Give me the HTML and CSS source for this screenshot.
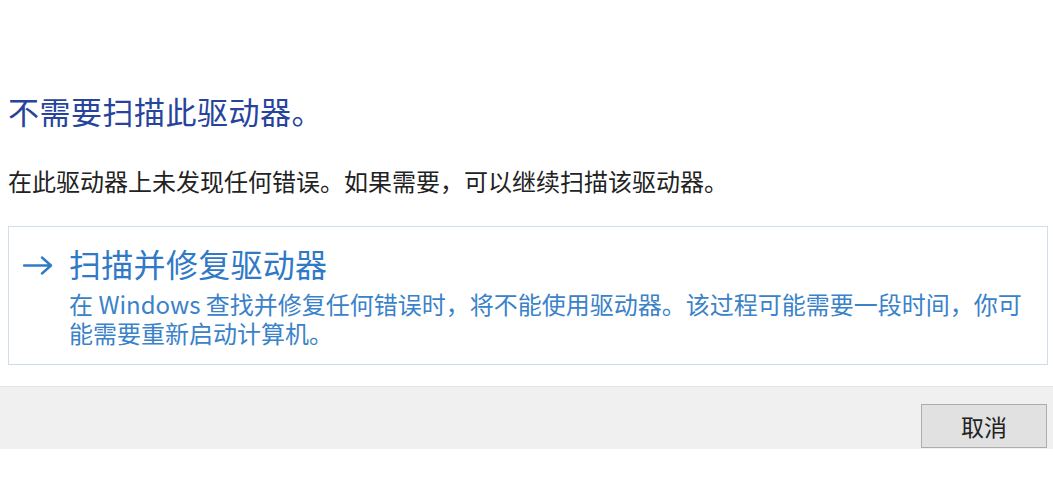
FILE: index.html
```html
<!DOCTYPE html>
<html lang="zh-CN">
<head>
<meta charset="utf-8">
<title>扫描驱动器</title>
<link rel="stylesheet" href="styles.css">
</head>
<body>
<div class="dialog">
  <div class="content">
    <h1 class="main-title">不需要扫描此驱动器。</h1>
    <p class="info">在此驱动器上未发现任何错误。如果需要，可以继续扫描该驱动器。</p>
    <div class="command-link">
      <div class="cl-head">
        <svg class="arrow" width="30" height="20" viewBox="0 0 30 20" aria-hidden="true">
          <path d="M1 10.5 H28 M19 2.5 L28 10.5 L19 18.5" fill="none" stroke="#2f7bc8" stroke-width="2.4" stroke-linecap="round" stroke-linejoin="round"/>
        </svg>
        <span class="cl-title">扫描并修复驱动器</span>
      </div>
      <p class="cl-desc">在 Windows 查找并修复任何错误时，将不能使用驱动器。该过程可能需要一段时间，你可能需要重新启动计算机。</p>
    </div>
  </div>
  <div class="footer">
    <button class="btn" type="button">取消</button>
  </div>
</div>
</body>
</html>
```

FILE: styles.css
```css
html, body {
  margin: 0;
  padding: 0;
  background: #ffffff;
}

body {
  font-family: "Noto Sans CJK SC", "Noto Sans", sans-serif;
  width: 1053px;
  height: 500px;
  overflow: hidden;
}

.dialog {
  display: flex;
  flex-direction: column;
}

.content {
  padding: 91px 5px 0 8px;
}

.main-title {
  margin: 0;
  font-size: 31px;
  line-height: 40px;
  font-weight: 400;
  color: #27449c;
  letter-spacing: 0.5px;
}

.info {
  margin: 33px 0 0 0;
  font-size: 24px;
  line-height: 34px;
  color: #222222;
}

.command-link {
  margin-top: 28px;
  border: 1px solid #cfdeea;
  padding: 16px 14px 17px 14px;
}

.cl-head {
  display: flex;
  align-items: center;
  gap: 16px;
  height: 40px;
}

.arrow {
  flex: none;
  margin-top: 3px;
}

.cl-title {
  font-size: 32px;
  line-height: 40px;
  color: #2f79c6;
  letter-spacing: 0.3px;
}

.cl-desc {
  margin: 6px 0 0 46px;
  font-size: 24px;
  line-height: 29px;
  color: #3a82c9;
}

.footer {
  margin-top: 21px;
  border-top: 1px solid #e4e4e4;
  background: #f0f0f0;
  height: 63px;
  display: flex;
  justify-content: flex-end;
  align-items: flex-end;
  padding: 0 6px 1px 0;
  box-sizing: border-box;
}

.btn {
  width: 126px;
  height: 44px;
  background: #e1e1e1;
  border: 1px solid #adadad;
  border-radius: 0;
  font-family: "Noto Sans CJK SC", "Noto Sans", sans-serif;
  font-size: 23px;
  color: #222222;
  padding: 0;
  line-height: 1;
}
```
